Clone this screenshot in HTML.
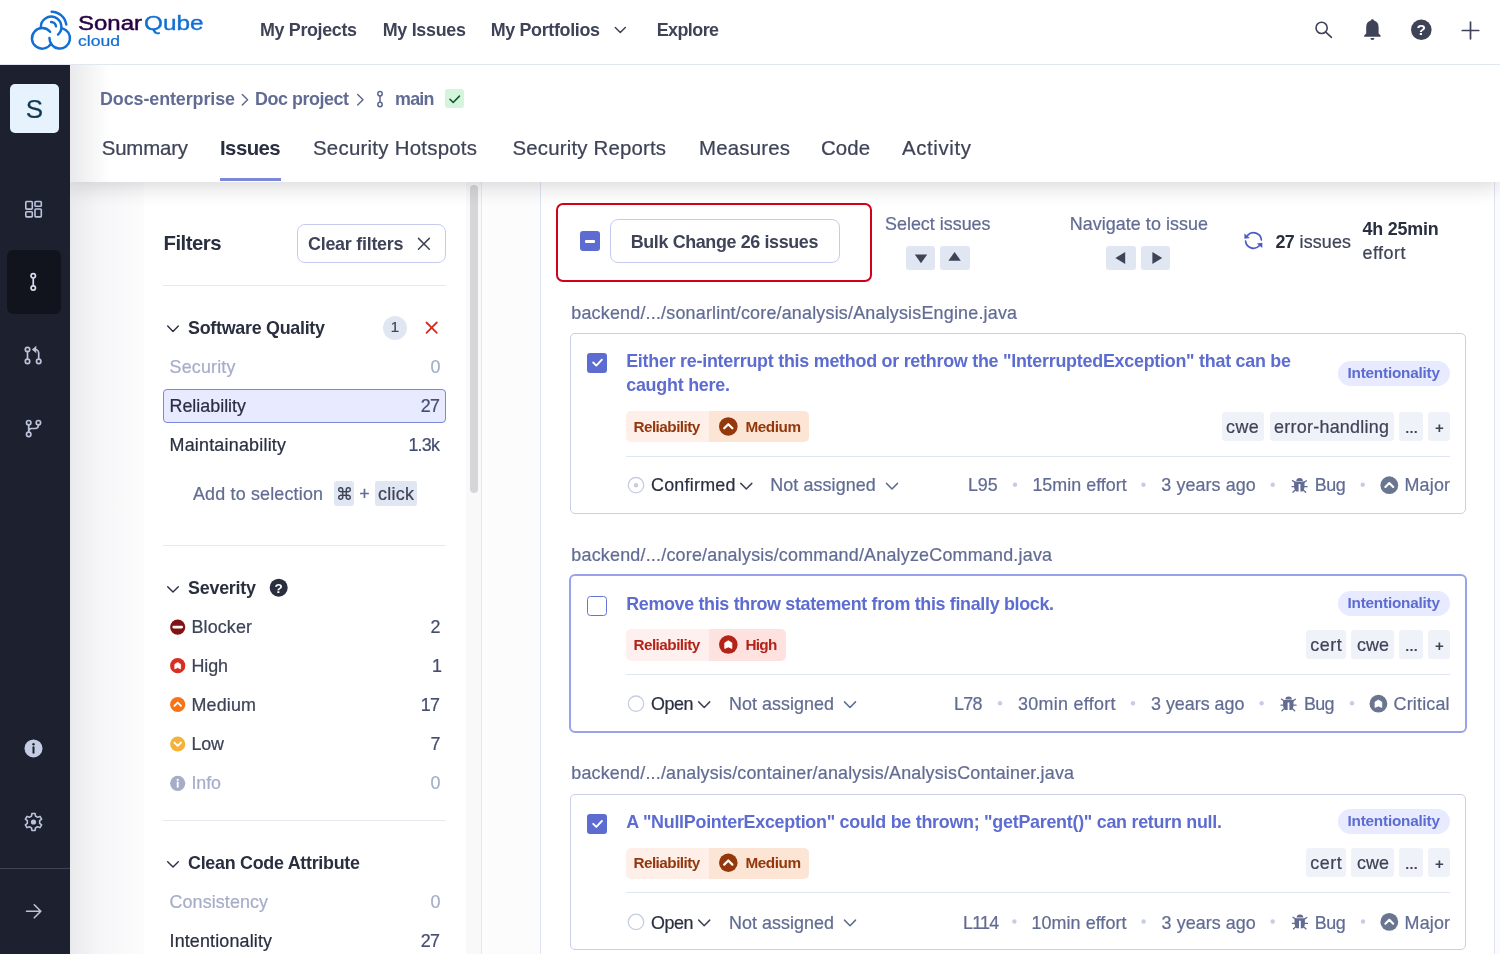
<!DOCTYPE html>
<html lang="en"><head><meta charset="utf-8"><title>SonarQube Cloud - Issues</title>
<style>
html,body{margin:0;padding:0}
body{width:1500px;height:954px;overflow:hidden;position:relative;background:#fff;font-family:"Liberation Sans", Arial, sans-serif;}
#root{position:absolute;left:0;top:0;width:1500px;height:954px;overflow:hidden;will-change:transform}
#root>div,#root>svg{position:absolute;box-sizing:border-box}
.t{position:absolute;white-space:pre;}
</style></head><body><div id="root">
<div style="left:70px;top:182px;width:1430px;height:772px;background:#fcfcfd;"></div>
<div style="left:144px;top:182px;width:326px;height:772px;background:#fff;"></div>
<div style="left:466px;top:182px;width:15px;height:772px;background:#f9f9fa;"></div>
<div style="left:470.3px;top:185px;width:7.699999999999989px;height:308px;background:#d6d6d8;border-radius:4px;"></div>
<div style="left:481px;top:182px;width:1px;height:772px;background:#e6e9f5;"></div>
<div style="left:540px;top:182px;width:955px;height:772px;background:#fff;border-left:1px solid #dfe3f3;border-right:1px solid #dfe3f3;"></div>
<div style="left:70px;top:65px;width:75px;height:889px;background:linear-gradient(90deg,rgba(40,44,60,.085),rgba(40,44,60,.026) 40%,rgba(40,44,60,0) 100%);"></div>
<div style="left:70px;top:65px;width:1430px;height:117px;background:#fff;box-shadow:0 2px 22px rgba(20,22,32,.20);"></div>
<div style="left:70px;top:65px;width:40px;height:117px;background:linear-gradient(90deg,rgba(40,44,60,.10),rgba(40,44,60,0));"></div>
<div style="left:220px;top:178px;width:61px;height:3px;background:#7b87d9;"></div>
<div style="left:0px;top:0px;width:1500px;height:65px;background:#fff;border-bottom:1px solid #e1e6f3;"></div>
<div style="left:0px;top:65px;width:70px;height:889px;background:#1d212f;"></div>
<div style="left:7px;top:250px;width:54px;height:64px;background:#12141d;border-radius:6px;"></div>
<div style="left:0px;top:868px;width:70px;height:1px;background:#3e4357;"></div>
<div style="left:10px;top:84px;width:49px;height:49px;background:#e7f3fc;border-radius:5px;"></div>
<div style="left:445px;top:89px;width:19px;height:19px;background:#d4f5dc;border-radius:3px;"></div>
<div style="left:297px;top:224px;width:149px;height:39px;border:1px solid #c6cbee;border-radius:8px;background:#fff;"></div>
<div style="left:163px;top:285px;width:283px;height:1px;background:#e8e9ee;"></div>
<div style="left:383px;top:315.5px;width:24px;height:24.0px;background:#e1e6f3;border-radius:12px;"></div>
<div style="left:163px;top:388.5px;width:283px;height:34.0px;background:#e8ebff;border:1px solid #7b87d9;border-radius:4px;"></div>
<div style="left:334px;top:481.3px;width:20.19999999999999px;height:24.30000000000001px;background:#e1e6f3;border-radius:3px;"></div>
<div style="left:375px;top:481.3px;width:42px;height:24.30000000000001px;background:#e1e6f3;border-radius:3px;"></div>
<div style="left:163px;top:545px;width:283px;height:1px;background:#e8e9ee;"></div>
<div style="left:163px;top:820px;width:283px;height:1px;background:#e8e9ee;"></div>
<div style="left:556px;top:203px;width:316px;height:79px;border:2.6px solid #d0021b;border-radius:7px;"></div>
<div style="left:580px;top:231px;width:20px;height:20px;background:#5d6cd0;border-radius:3px;"></div>
<div style="left:585px;top:239.6px;width:10px;height:3.5999999999999943px;background:#fff;border-radius:1px;"></div>
<div style="left:610px;top:219px;width:229.5px;height:44px;border:1px solid #c6cbee;border-radius:8px;background:#fff;"></div>
<div style="left:906px;top:245.7px;width:29.399999999999977px;height:24.0px;background:#e1e6f3;border-radius:3px;"></div>
<div style="left:940.3px;top:245.7px;width:29.399999999999977px;height:24.0px;background:#e1e6f3;border-radius:3px;"></div>
<div style="left:1106.4px;top:245.7px;width:29.40000000000009px;height:24.0px;background:#e1e6f3;border-radius:3px;"></div>
<div style="left:1140.7px;top:245.7px;width:29.40000000000009px;height:24.0px;background:#e1e6f3;border-radius:3px;"></div>
<div style="left:570px;top:333px;width:895.5px;height:181px;border:1px solid #c9cfe6;border-radius:5px;background:#fff;"></div>
<div style="left:587px;top:352.9px;width:20px;height:20.0px;background:#5d6cd0;border-radius:3px;"></div>
<div style="left:625.5px;top:411.2px;width:83.79999999999995px;height:31.30000000000001px;background:#fef0e9;border-radius:5px 0 0 5px;"></div>
<div style="left:709.3px;top:411.2px;width:100.10000000000002px;height:31.30000000000001px;background:#fde5d6;border-radius:0 5px 5px 0;"></div>
<div style="left:1337.5px;top:361.2px;width:112.5px;height:24.80000000000001px;background:#e8ebff;border-radius:13px;"></div>
<div style="left:1221.6px;top:411.9px;width:42.700000000000045px;height:29.30000000000001px;background:#eff2f9;border-radius:3px;"></div>
<div style="left:1269.6px;top:411.9px;width:124.40000000000009px;height:29.30000000000001px;background:#eff2f9;border-radius:3px;"></div>
<div style="left:1399.2px;top:411.9px;width:24.0px;height:29.30000000000001px;background:#eff2f9;border-radius:3px;"></div>
<div style="left:1428.3px;top:411.9px;width:21.700000000000045px;height:29.30000000000001px;background:#eff2f9;border-radius:3px;"></div>
<div style="left:626px;top:456px;width:824px;height:1px;background:#e1e6f3;"></div>
<div style="left:569px;top:574.4px;width:897.5px;height:158.30000000000007px;border:2px solid #98a3ec;border-radius:6px;background:#fff;"></div>
<div style="left:587px;top:596px;width:20px;height:19.5px;background:#fff;border:1.4px solid #6575d6;border-radius:3.5px;"></div>
<div style="left:625.5px;top:629.3px;width:83.79999999999995px;height:31.300000000000068px;background:#fef0ee;border-radius:5px 0 0 5px;"></div>
<div style="left:709.3px;top:629.3px;width:76.70000000000005px;height:31.300000000000068px;background:#fde2df;border-radius:0 5px 5px 0;"></div>
<div style="left:1337.5px;top:590.8px;width:112.5px;height:24.799999999999955px;background:#e8ebff;border-radius:13px;"></div>
<div style="left:1305.6px;top:630px;width:40.600000000000136px;height:29.299999999999955px;background:#eff2f9;border-radius:3px;"></div>
<div style="left:1351px;top:630px;width:43px;height:29.299999999999955px;background:#eff2f9;border-radius:3px;"></div>
<div style="left:1399.2px;top:630px;width:24.0px;height:29.299999999999955px;background:#eff2f9;border-radius:3px;"></div>
<div style="left:1428.3px;top:630px;width:21.700000000000045px;height:29.299999999999955px;background:#eff2f9;border-radius:3px;"></div>
<div style="left:626px;top:674px;width:824px;height:1px;background:#e1e6f3;"></div>
<div style="left:570px;top:794px;width:895.5px;height:155.5px;border:1px solid #c9cfe6;border-radius:5px;background:#fff;"></div>
<div style="left:587px;top:814.2px;width:20px;height:20.0px;background:#5d6cd0;border-radius:3px;"></div>
<div style="left:625.5px;top:847.5px;width:83.79999999999995px;height:31.300000000000068px;background:#fef0e9;border-radius:5px 0 0 5px;"></div>
<div style="left:709.3px;top:847.5px;width:100.10000000000002px;height:31.300000000000068px;background:#fde5d6;border-radius:0 5px 5px 0;"></div>
<div style="left:1337.5px;top:809.0px;width:112.5px;height:24.799999999999955px;background:#e8ebff;border-radius:13px;"></div>
<div style="left:1305.6px;top:848.2px;width:40.600000000000136px;height:29.299999999999955px;background:#eff2f9;border-radius:3px;"></div>
<div style="left:1351px;top:848.2px;width:43px;height:29.299999999999955px;background:#eff2f9;border-radius:3px;"></div>
<div style="left:1399.2px;top:848.2px;width:24.0px;height:29.299999999999955px;background:#eff2f9;border-radius:3px;"></div>
<div style="left:1428.3px;top:848.2px;width:21.700000000000045px;height:29.299999999999955px;background:#eff2f9;border-radius:3px;"></div>
<div style="left:626px;top:892px;width:824px;height:1px;background:#e1e6f3;"></div>
<svg style="left:0;top:0" width="1500" height="954" viewBox="0 0 1500 954">
<path d="M593.2 362.5l3.1 3.1 5.6-5.9" fill="none" stroke="#fff" stroke-width="1.9" stroke-linecap="round" stroke-linejoin="round"/>
<circle cx="728.3" cy="426.45000000000005" r="9.3" fill="#93370d"/>
<path d="M724.21 428.31l4.09 -4.09 4.09 4.09" fill="none" stroke="#fff" stroke-width="2.23" stroke-linecap="round" stroke-linejoin="round"/>
<circle cx="636" cy="485.2" r="7.7" fill="#fff" stroke="#c5cde0" stroke-width="1.3"/>
<circle cx="636" cy="485.2" r="2.2" fill="#c5cde0"/>
<path d="M740.8 483.4l5.5 5.6 5.5 -5.6" fill="none" stroke="#3e4357" stroke-width="1.5" stroke-linecap="round" stroke-linejoin="round"/>
<path d="M886.5 483.4l5.5 5.6 5.5 -5.6" fill="none" stroke="#626c93" stroke-width="1.5" stroke-linecap="round" stroke-linejoin="round"/>
<circle cx="1015" cy="484.8" r="2.2" fill="#c5cde6"/>
<circle cx="1143.5" cy="484.8" r="2.2" fill="#c5cde6"/>
<circle cx="1272.7" cy="484.8" r="2.2" fill="#c5cde6"/>
<circle cx="1362.7" cy="484.8" r="2.2" fill="#c5cde6"/>
<g transform="translate(1292 485.2)"><path fill="#626c93" d="M4.3 -4.3a3.3 3 0 0 1 6.6 0z"/><path fill="#626c93" d="M2.1 -3.6h10.400v5c0 2.500-1 4-2 5h-6.400c-1-1-2-2.500-2-5z"/><rect x="6.600" y="-1.200" width="1.800" height="8" fill="#fff"/><path d="M.5 -4.600l2.500 1.600M14.400 -4.400l-2.500 1.600M0 1.500h2.500M12.400 1.500h2.700M3.400 4.800l-2.500 2.200M11.200 4.800l2.500 2.200" fill="none" stroke="#626c93" stroke-width="1.300" stroke-linecap="round"/></g>
<circle cx="1389.3" cy="485.2" r="8.9" fill="#6a7590"/>
<path d="M1385.38 486.98l3.92 -3.92 3.92 3.92" fill="none" stroke="#fff" stroke-width="2.14" stroke-linecap="round" stroke-linejoin="round"/>
<circle cx="728.3" cy="644.5500000000001" r="9.3" fill="#b42318"/>
<path fill="#fff" stroke="#fff" stroke-width="0.84" stroke-linejoin="round" d="M728.30 640.74l3.53 2.14v5.58l-3.53 -1.58l-3.53 1.58v-5.58z"/>
<circle cx="636" cy="703.7" r="7.7" fill="#fff" stroke="#c5cde0" stroke-width="1.3"/>
<path d="M698.7 701.9000000000001l5.5 5.6 5.5 -5.6" fill="none" stroke="#3e4357" stroke-width="1.5" stroke-linecap="round" stroke-linejoin="round"/>
<path d="M844.5 701.9000000000001l5.5 5.6 5.5 -5.6" fill="none" stroke="#626c93" stroke-width="1.5" stroke-linecap="round" stroke-linejoin="round"/>
<circle cx="1000" cy="703.3000000000001" r="2.2" fill="#c5cde6"/>
<circle cx="1133" cy="703.3000000000001" r="2.2" fill="#c5cde6"/>
<circle cx="1261.6" cy="703.3000000000001" r="2.2" fill="#c5cde6"/>
<circle cx="1352" cy="703.3000000000001" r="2.2" fill="#c5cde6"/>
<g transform="translate(1281 703.7)"><path fill="#626c93" d="M4.3 -4.3a3.3 3 0 0 1 6.6 0z"/><path fill="#626c93" d="M2.1 -3.6h10.400v5c0 2.500-1 4-2 5h-6.400c-1-1-2-2.500-2-5z"/><rect x="6.600" y="-1.200" width="1.800" height="8" fill="#fff"/><path d="M.5 -4.600l2.500 1.600M14.400 -4.400l-2.500 1.600M0 1.500h2.500M12.400 1.500h2.700M3.400 4.800l-2.500 2.200M11.200 4.800l2.500 2.200" fill="none" stroke="#626c93" stroke-width="1.300" stroke-linecap="round"/></g>
<circle cx="1378.4" cy="703.7" r="8.9" fill="#6a7590"/>
<path fill="#fff" stroke="#fff" stroke-width="0.80" stroke-linejoin="round" d="M1378.40 700.05l3.38 2.05v5.34l-3.38 -1.51l-3.38 1.51v-5.34z"/>
<path d="M593.2 823.8000000000001l3.1 3.1 5.6-5.9" fill="none" stroke="#fff" stroke-width="1.9" stroke-linecap="round" stroke-linejoin="round"/>
<circle cx="728.3" cy="862.7500000000001" r="9.3" fill="#93370d"/>
<path d="M724.21 864.61l4.09 -4.09 4.09 4.09" fill="none" stroke="#fff" stroke-width="2.23" stroke-linecap="round" stroke-linejoin="round"/>
<circle cx="636" cy="921.9000000000001" r="7.7" fill="#fff" stroke="#c5cde0" stroke-width="1.3"/>
<path d="M698.7 920.1000000000001l5.5 5.6 5.5 -5.6" fill="none" stroke="#3e4357" stroke-width="1.5" stroke-linecap="round" stroke-linejoin="round"/>
<path d="M844.5 920.1000000000001l5.5 5.6 5.5 -5.6" fill="none" stroke="#626c93" stroke-width="1.5" stroke-linecap="round" stroke-linejoin="round"/>
<circle cx="1014.4" cy="921.5000000000001" r="2.2" fill="#c5cde6"/>
<circle cx="1143.6" cy="921.5000000000001" r="2.2" fill="#c5cde6"/>
<circle cx="1272.7" cy="921.5000000000001" r="2.2" fill="#c5cde6"/>
<circle cx="1363" cy="921.5000000000001" r="2.2" fill="#c5cde6"/>
<g transform="translate(1292.4 921.9000000000001)"><path fill="#626c93" d="M4.3 -4.3a3.3 3 0 0 1 6.6 0z"/><path fill="#626c93" d="M2.1 -3.6h10.400v5c0 2.500-1 4-2 5h-6.400c-1-1-2-2.500-2-5z"/><rect x="6.600" y="-1.200" width="1.800" height="8" fill="#fff"/><path d="M.5 -4.600l2.500 1.600M14.400 -4.400l-2.500 1.600M0 1.500h2.500M12.400 1.500h2.700M3.400 4.800l-2.500 2.200M11.200 4.800l2.500 2.200" fill="none" stroke="#626c93" stroke-width="1.300" stroke-linecap="round"/></g>
<circle cx="1389.3" cy="921.9000000000001" r="8.9" fill="#6a7590"/>
<path d="M1385.38 923.68l3.92 -3.92 3.92 3.92" fill="none" stroke="#fff" stroke-width="2.14" stroke-linecap="round" stroke-linejoin="round"/>
<g transform="translate(25 5) scale(0.05556)" fill="none" stroke="#126ed3" stroke-width="44" stroke-linecap="round"><path d="M452 482A185 185 0 1 0 470 693"/><path d="M440 595A185 185 0 1 0 670 420"/><path d="M285 400A185 185 0 1 1 594 532"/><path d="M470 305A90 90 0 0 1 558 385"/><path d="M480 120A275 275 0 0 1 743 350"/></g>
<g fill="none" stroke="#3e4357" stroke-width="1.6" stroke-linecap="round"><circle cx="1321.6" cy="27.9" r="5.6"/><path d="M1325.8 32.2l5.6 5.2"/></g>
<path fill="#3e4357" d="M1372.4 19.2c.9 0 1.5.6 1.6 1.4 3 .8 4.6 3.3 4.6 6.6v6.2l2 2v1.3h-16.4v-1.3l2-2v-6.2c0-3.3 1.6-5.800 4.600-6.600.1-.8.700-1.400 1.600-1.400zM1370.400 38h4a2 2 0 0 1-4 0z"/>
<circle cx="1421.3" cy="29.7" r="10.3" fill="#3e4357"/>
<path d="M1462.300 30.500h16.400M1470.500 22.200v16.600" stroke="#3e4357" stroke-width="1.7" stroke-linecap="round"/>
<path d="M615.300 27.500l5 5 5-5" fill="none" stroke="#3e4357" stroke-width="1.500" stroke-linecap="round" stroke-linejoin="round"/>
<g fill="none" stroke="#5c668f" stroke-width="1.400" stroke-linecap="round" stroke-linejoin="round"><path d="M242.300 94.400l5.300 5.300-5.300 5.300M357.700 94.400l5.300 5.300-5.300 5.300"/></g>
<g fill="none" stroke="#5c668f" stroke-width="1.500"><circle cx="380" cy="93.700" r="2.200"/><circle cx="380" cy="104.500" r="2.200"/><path d="M380 95.900v6.400"/></g>
<path d="M450 99.300l3.200 3.200 6.200-6.400" fill="none" stroke="#14532d" stroke-width="1.600" stroke-linecap="round" stroke-linejoin="round"/>
<g fill="none" stroke="#bcc3d9" stroke-width="1.600" stroke-linejoin="round"><rect x="25.800" y="201.500" width="6.500" height="7.600" rx=".8"/><rect x="35" y="201.500" width="6.300" height="4.700" rx=".8"/><rect x="25.800" y="211.800" width="6.500" height="5.100" rx=".8"/><rect x="35" y="209" width="6.300" height="7.900" rx=".8"/></g>
<g fill="none" stroke="#d7dcee" stroke-width="1.700"><circle cx="33.250" cy="275.800" r="2.200"/><circle cx="33.250" cy="288" r="2.200"/><path d="M33.250 278v7.800"/></g>
<g fill="none" stroke="#bcc3d9" stroke-width="1.700" stroke-linecap="round"><circle cx="27.500" cy="349.500" r="2.200"/><circle cx="27.500" cy="361.400" r="2.200"/><circle cx="38.700" cy="361.400" r="2.200"/><path d="M27.500 351.700v7.500M38.700 359.200v-6.200a3.500 3.500 0 0 0-3.500-3.500h-1.700"/></g>
<path fill="#bcc3d9" d="M32 349.500l4.300-3.800v7.600z"/>
<g fill="none" stroke="#bcc3d9" stroke-width="1.700" stroke-linecap="round"><circle cx="28.700" cy="422.700" r="2.200"/><circle cx="28.700" cy="434.400" r="2.200"/><circle cx="38.400" cy="422.700" r="2.200"/><path d="M28.700 424.900v7.300M38.400 424.900v.6a3 3 0 0 1-3 3h-3.700a3 3 0 0 0-3 3"/></g>
<circle cx="33.500" cy="748.400" r="9" fill="#c5cde4"/><circle cx="33.500" cy="744.300" r="1.200" fill="#1d212f"/><path d="M33.500 747.300v5.400" stroke="#1d212f" stroke-width="2" stroke-linecap="round"/>
<path d="M31.55 816.01L31.89 813.55L35.11 813.55L35.45 816.01L37.72 817.32L40.01 816.38L41.62 819.17L39.66 820.69L39.66 823.31L41.62 824.83L40.01 827.62L37.72 826.68L35.45 827.99L35.11 830.45L31.89 830.45L31.55 827.99L29.28 826.68L26.99 827.62L25.38 824.83L27.34 823.31L27.34 820.69L25.38 819.17L26.99 816.38L29.28 817.32Z" fill="none" stroke="#bcc3d9" stroke-width="1.6" stroke-linejoin="round"/>
<circle cx="33.500" cy="822" r="2.600" fill="#bcc3d9"/>
<path d="M26.500 911.300h14M34.300 904.800l6.500 6.500-6.500 6.500" fill="none" stroke="#bcc3d9" stroke-width="1.600" stroke-linecap="round" stroke-linejoin="round"/>
<path d="M418.500 238.400l10.800 10.800M429.300 238.400l-10.800 10.800" stroke="#3e4357" stroke-width="1.500" stroke-linecap="round"/>
<path d="M426.500 322.500l10.300 10.300M436.800 322.500l-10.300 10.300" stroke="#dd2c1c" stroke-width="1.800" stroke-linecap="round"/>
<path d="M167.7 326.1l5.300 5.300 5.300-5.300" fill="none" stroke="#2a2f40" stroke-width="1.400" stroke-linecap="round" stroke-linejoin="round"/>
<path d="M167.7 586.8l5.300 5.300 5.300-5.300" fill="none" stroke="#2a2f40" stroke-width="1.400" stroke-linecap="round" stroke-linejoin="round"/>
<path d="M167.7 861.8l5.300 5.300 5.300-5.300" fill="none" stroke="#2a2f40" stroke-width="1.400" stroke-linecap="round" stroke-linejoin="round"/>
<circle cx="278.700" cy="587.700" r="9" fill="#2a2f40"/>
<circle cx="177.7" cy="627.1" r="7.6" fill="#801313"/>
<path d="M173.7 627.1h8.0" stroke="#fff" stroke-width="2.6" stroke-linecap="round"/>
<circle cx="177.7" cy="665.7" r="7.6" fill="#d92d20"/>
<path fill="#fff" stroke="#fff" stroke-width="0.70" stroke-linejoin="round" d="M177.70 662.50l2.90 1.80v4.60l-2.90 -1.30l-2.90 1.30v-4.60z"/>
<circle cx="177.7" cy="704.5" r="7.6" fill="#f97316"/>
<path d="M174.39999999999998 705.9l3.3 -3.3 3.3 3.3" fill="none" stroke="#fff" stroke-width="1.9" stroke-linecap="round" stroke-linejoin="round"/>
<circle cx="177.7" cy="744" r="7.6" fill="#f4b23c"/>
<path d="M174.39999999999998 742.6l3.3 3.3 3.3 -3.3" fill="none" stroke="#fff" stroke-width="1.9" stroke-linecap="round" stroke-linejoin="round"/>
<circle cx="177.7" cy="783.3" r="7.6" fill="#a6adc9"/>
<circle cx="177.7" cy="779.9" r="1.1" fill="#fff"/><path d="M177.7 782.5v4.4" stroke="#fff" stroke-width="1.9" stroke-linecap="round"/>
<path fill="#3e4357" d="M914.800 254.400h12.400l-6.200 8.900z"/>
<path fill="#3e4357" d="M948.400 260.800h12.400l-6.200-8.900z"/>
<path fill="#3e4357" d="M1125.200 252v12l-9.800-6z"/>
<path fill="#3e4357" d="M1152.400 252v12l9.800-6z"/>
<g fill="none" stroke="#4d59c9" stroke-width="1.700" stroke-linecap="round"><path d="M1261.400 240A7.900 7.900 0 0 0 1247.600 235.400"/><path d="M1245.600 241.200A7.900 7.900 0 0 0 1259.300 245.700"/></g>
<path fill="#4d59c9" d="M1244.400 233.500v5.300l5.500-.7zM1262.300 248v-5.300l-5.500.7z"/>
</svg>
<span class="t" style="left:10.0px;top:96px;font-size:26px;line-height:26px;color:#12384f;-webkit-text-stroke:0.22px;width:49px;text-align:center;">S</span>
<span class="t" style="left:78.0px;top:14px;font-size:19.5px;line-height:19.5px;color:#290042;transform:scaleX(1.2297);transform-origin:0 0;-webkit-text-stroke:0.45px #290042;">Sonar</span>
<span class="t" style="left:143.5px;top:14px;font-size:19.5px;line-height:19.5px;color:#126ed3;transform:scaleX(1.2473);transform-origin:0 0;-webkit-text-stroke:0.35px #126ed3;">Qube</span>
<span class="t" style="left:78.0px;top:33px;font-size:15px;line-height:15px;color:#126ed3;-webkit-text-stroke:0.22px;transform:scaleX(1.1712);transform-origin:0 0;">cloud</span>
<span class="t" style="left:260.0px;top:22px;font-size:17.9px;line-height:17.9px;color:#3e4357;font-weight:700;letter-spacing:-0.344px;">My Projects</span>
<span class="t" style="left:382.7px;top:22px;font-size:17.9px;line-height:17.9px;color:#3e4357;font-weight:700;letter-spacing:-0.279px;">My Issues</span>
<span class="t" style="left:490.7px;top:22px;font-size:17.9px;line-height:17.9px;color:#3e4357;font-weight:700;letter-spacing:-0.334px;">My Portfolios</span>
<span class="t" style="left:656.7px;top:22px;font-size:17.9px;line-height:17.9px;color:#3e4357;font-weight:700;letter-spacing:-0.554px;">Explore</span>
<span class="t" style="left:100.0px;top:91px;font-size:17.9px;line-height:17.9px;color:#626c93;font-weight:700;letter-spacing:-0.087px;">Docs-enterprise</span>
<span class="t" style="left:255.0px;top:91px;font-size:17.9px;line-height:17.9px;color:#626c93;font-weight:700;letter-spacing:-0.442px;">Doc project</span>
<span class="t" style="left:395.0px;top:91px;font-size:17.9px;line-height:17.9px;color:#626c93;font-weight:700;letter-spacing:-0.750px;">main</span>
<span class="t" style="left:101.7px;top:138px;font-size:20.4px;line-height:20.4px;color:#3e4357;-webkit-text-stroke:0.22px;letter-spacing:-0.158px;">Summary</span>
<span class="t" style="left:220.0px;top:138px;font-size:20.4px;line-height:20.4px;color:#2a2f40;font-weight:700;letter-spacing:-0.557px;">Issues</span>
<span class="t" style="left:313.0px;top:138px;font-size:20.4px;line-height:20.4px;color:#3e4357;-webkit-text-stroke:0.22px;letter-spacing:0.263px;">Security Hotspots</span>
<span class="t" style="left:512.5px;top:138px;font-size:20.4px;line-height:20.4px;color:#3e4357;-webkit-text-stroke:0.22px;letter-spacing:0.184px;">Security Reports</span>
<span class="t" style="left:699.0px;top:138px;font-size:20.4px;line-height:20.4px;color:#3e4357;-webkit-text-stroke:0.22px;letter-spacing:0.210px;">Measures</span>
<span class="t" style="left:821.0px;top:138px;font-size:20.4px;line-height:20.4px;color:#3e4357;-webkit-text-stroke:0.22px;letter-spacing:0.083px;">Code</span>
<span class="t" style="left:902.0px;top:138px;font-size:20.4px;line-height:20.4px;color:#3e4357;-webkit-text-stroke:0.22px;letter-spacing:0.632px;">Activity</span>
<span class="t" style="left:163.5px;top:233px;font-size:20.4px;line-height:20.4px;color:#2a2f40;font-weight:700;letter-spacing:-0.517px;">Filters</span>
<span class="t" style="left:308.0px;top:236px;font-size:17.9px;line-height:17.9px;color:#3e4357;font-weight:700;letter-spacing:-0.246px;">Clear filters</span>
<span class="t" style="left:188.0px;top:320px;font-size:17.9px;line-height:17.9px;color:#2a2f40;font-weight:700;letter-spacing:-0.278px;">Software Quality</span>
<span class="t" style="left:383.0px;top:319px;font-size:15px;line-height:15px;color:#3e4357;-webkit-text-stroke:0.22px;width:24px;text-align:center;">1</span>
<span class="t" style="left:169.5px;top:359px;font-size:17.9px;line-height:17.9px;color:#a6adc9;-webkit-text-stroke:0.22px;letter-spacing:0.194px;">Security</span>
<span class="t" style="left:430.5px;top:359px;font-size:17.9px;line-height:17.9px;color:#a6adc9;-webkit-text-stroke:0.22px;">0</span>
<span class="t" style="left:169.5px;top:398px;font-size:17.9px;line-height:17.9px;color:#2a2f40;-webkit-text-stroke:0.22px;letter-spacing:-0.006px;">Reliability</span>
<span class="t" style="left:420.8px;top:398px;font-size:17.9px;line-height:17.9px;color:#454d70;-webkit-text-stroke:0.22px;letter-spacing:-0.750px;">27</span>
<span class="t" style="left:169.5px;top:437px;font-size:17.9px;line-height:17.9px;color:#2a2f40;-webkit-text-stroke:0.22px;letter-spacing:0.223px;">Maintainability</span>
<span class="t" style="left:408.4px;top:437px;font-size:17.9px;line-height:17.9px;color:#454d70;-webkit-text-stroke:0.22px;letter-spacing:-0.750px;">1.3k</span>
<span class="t" style="left:193.0px;top:486px;font-size:17.9px;line-height:17.9px;color:#626c93;-webkit-text-stroke:0.22px;letter-spacing:0.179px;">Add to selection</span>
<span class="t" style="left:335.5px;top:486px;font-size:17px;line-height:17px;color:#3e4357;-webkit-text-stroke:0.22px;font-family:"DejaVu Sans",sans-serif;">⌘</span>
<span class="t" style="left:359.3px;top:486px;font-size:17.9px;line-height:17.9px;color:#626c93;-webkit-text-stroke:0.22px;">+</span>
<span class="t" style="left:378.0px;top:486px;font-size:17.9px;line-height:17.9px;color:#3e4357;-webkit-text-stroke:0.22px;letter-spacing:0.301px;">click</span>
<span class="t" style="left:188.0px;top:580px;font-size:17.9px;line-height:17.9px;color:#2a2f40;font-weight:700;letter-spacing:-0.232px;">Severity</span>
<span class="t" style="left:191.5px;top:619px;font-size:17.9px;line-height:17.9px;color:#3e4357;-webkit-text-stroke:0.22px;letter-spacing:0.141px;">Blocker</span>
<span class="t" style="left:430.5px;top:619px;font-size:17.9px;line-height:17.9px;color:#454d70;-webkit-text-stroke:0.22px;">2</span>
<span class="t" style="left:191.5px;top:658px;font-size:17.9px;line-height:17.9px;color:#3e4357;-webkit-text-stroke:0.22px;letter-spacing:-0.099px;">High</span>
<span class="t" style="left:432.0px;top:658px;font-size:17.9px;line-height:17.9px;color:#454d70;-webkit-text-stroke:0.22px;">1</span>
<span class="t" style="left:191.5px;top:697px;font-size:17.9px;line-height:17.9px;color:#3e4357;-webkit-text-stroke:0.22px;letter-spacing:0.172px;">Medium</span>
<span class="t" style="left:420.8px;top:697px;font-size:17.9px;line-height:17.9px;color:#454d70;-webkit-text-stroke:0.22px;letter-spacing:-0.750px;">17</span>
<span class="t" style="left:191.5px;top:736px;font-size:17.9px;line-height:17.9px;color:#3e4357;-webkit-text-stroke:0.22px;letter-spacing:-0.164px;">Low</span>
<span class="t" style="left:430.5px;top:736px;font-size:17.9px;line-height:17.9px;color:#454d70;-webkit-text-stroke:0.22px;">7</span>
<span class="t" style="left:191.5px;top:775px;font-size:17.9px;line-height:17.9px;color:#a6adc9;-webkit-text-stroke:0.22px;letter-spacing:-0.115px;">Info</span>
<span class="t" style="left:430.5px;top:775px;font-size:17.9px;line-height:17.9px;color:#a6adc9;-webkit-text-stroke:0.22px;">0</span>
<span class="t" style="left:188.0px;top:855px;font-size:17.9px;line-height:17.9px;color:#2a2f40;font-weight:700;letter-spacing:-0.277px;">Clean Code Attribute</span>
<span class="t" style="left:169.5px;top:894px;font-size:17.9px;line-height:17.9px;color:#a6adc9;-webkit-text-stroke:0.22px;letter-spacing:0.105px;">Consistency</span>
<span class="t" style="left:430.5px;top:894px;font-size:17.9px;line-height:17.9px;color:#a6adc9;-webkit-text-stroke:0.22px;">0</span>
<span class="t" style="left:169.5px;top:933px;font-size:17.9px;line-height:17.9px;color:#2a2f40;-webkit-text-stroke:0.22px;letter-spacing:0.157px;">Intentionality</span>
<span class="t" style="left:420.8px;top:933px;font-size:17.9px;line-height:17.9px;color:#454d70;-webkit-text-stroke:0.22px;letter-spacing:-0.750px;">27</span>
<span class="t" style="left:630.7px;top:234px;font-size:17.9px;line-height:17.9px;color:#3e4357;font-weight:700;letter-spacing:-0.360px;">Bulk Change 26 issues</span>
<span class="t" style="left:885.0px;top:216px;font-size:17.9px;line-height:17.9px;color:#626c93;-webkit-text-stroke:0.22px;letter-spacing:0.008px;">Select issues</span>
<span class="t" style="left:1069.7px;top:216px;font-size:17.9px;line-height:17.9px;color:#626c93;-webkit-text-stroke:0.22px;letter-spacing:0.066px;">Navigate to issue</span>
<span class="t" style="left:1275.6px;top:234px;font-size:17.9px;line-height:17.9px;color:#2a2f40;font-weight:700;letter-spacing:-0.750px;">27</span>
<span class="t" style="left:1294.4px;top:234px;font-size:17.9px;line-height:17.9px;color:#3e4357;-webkit-text-stroke:0.22px;letter-spacing:0.152px;"> issues</span>
<span class="t" style="left:1362.4px;top:221px;font-size:17.9px;line-height:17.9px;color:#2a2f40;font-weight:700;letter-spacing:-0.195px;">4h 25min</span>
<span class="t" style="left:1362.4px;top:245px;font-size:17.9px;line-height:17.9px;color:#3e4357;-webkit-text-stroke:0.22px;letter-spacing:0.549px;">effort</span>
<span class="t" style="left:571.3px;top:305px;font-size:17.9px;line-height:17.9px;color:#626c93;-webkit-text-stroke:0.22px;letter-spacing:0.206px;">backend/.../sonarlint/core/analysis/AnalysisEngine.java</span>
<span class="t" style="left:626.2px;top:353px;font-size:17.9px;line-height:17.9px;color:#5d6cd0;font-weight:700;letter-spacing:-0.252px;">Either re-interrupt this method or rethrow the &quot;InterruptedException&quot; that can be</span>
<span class="t" style="left:626.2px;top:377px;font-size:17.9px;line-height:17.9px;color:#5d6cd0;font-weight:700;letter-spacing:-0.234px;">caught here.</span>
<span class="t" style="left:633.4px;top:419px;font-size:15.3px;line-height:15.3px;color:#93370d;font-weight:700;letter-spacing:-0.527px;">Reliability</span>
<span class="t" style="left:745.5px;top:419px;font-size:15.3px;line-height:15.3px;color:#93370d;font-weight:700;letter-spacing:-0.459px;">Medium</span>
<span class="t" style="left:1347.5px;top:365px;font-size:15.3px;line-height:15.3px;color:#5d6cd0;font-weight:700;letter-spacing:-0.207px;">Intentionality</span>
<span class="t" style="left:1226.0px;top:419px;font-size:17.9px;line-height:17.9px;color:#3e4357;-webkit-text-stroke:0.22px;letter-spacing:0.486px;">cwe</span>
<span class="t" style="left:1274.0px;top:419px;font-size:17.9px;line-height:17.9px;color:#3e4357;-webkit-text-stroke:0.22px;letter-spacing:0.278px;">error-handling</span>
<span class="t" style="left:1404.7px;top:419px;font-size:17.9px;line-height:17.9px;color:#3e4357;-webkit-text-stroke:0.22px;letter-spacing:-0.750px;">...</span>
<span class="t" style="left:1435.0px;top:420px;font-size:15px;line-height:15px;color:#3e4357;font-weight:700;">+</span>
<span class="t" style="left:651.0px;top:477px;font-size:17.9px;line-height:17.9px;color:#2a2f40;-webkit-text-stroke:0.22px;letter-spacing:0.234px;">Confirmed</span>
<span class="t" style="left:770.3px;top:477px;font-size:17.9px;line-height:17.9px;color:#626c93;-webkit-text-stroke:0.22px;letter-spacing:0.088px;">Not assigned</span>
<span class="t" style="left:968.0px;top:477px;font-size:17.9px;line-height:17.9px;color:#626c93;-webkit-text-stroke:0.22px;letter-spacing:-0.130px;">L95</span>
<span class="t" style="left:1032.4px;top:477px;font-size:17.9px;line-height:17.9px;color:#626c93;-webkit-text-stroke:0.22px;letter-spacing:0.013px;">15min effort</span>
<span class="t" style="left:1161.3px;top:477px;font-size:17.9px;line-height:17.9px;color:#626c93;-webkit-text-stroke:0.22px;letter-spacing:0.090px;">3 years ago</span>
<span class="t" style="left:1314.7px;top:477px;font-size:17.9px;line-height:17.9px;color:#626c93;-webkit-text-stroke:0.22px;letter-spacing:-0.422px;">Bug</span>
<span class="t" style="left:1404.5px;top:477px;font-size:17.9px;line-height:17.9px;color:#626c93;-webkit-text-stroke:0.22px;letter-spacing:0.188px;">Major</span>
<span class="t" style="left:571.3px;top:547px;font-size:17.9px;line-height:17.9px;color:#626c93;-webkit-text-stroke:0.22px;letter-spacing:0.218px;">backend/.../core/analysis/command/AnalyzeCommand.java</span>
<span class="t" style="left:626.2px;top:596px;font-size:17.9px;line-height:17.9px;color:#5d6cd0;font-weight:700;letter-spacing:-0.325px;">Remove this throw statement from this finally block.</span>
<span class="t" style="left:633.4px;top:637px;font-size:15.3px;line-height:15.3px;color:#b42318;font-weight:700;letter-spacing:-0.527px;">Reliability</span>
<span class="t" style="left:745.5px;top:637px;font-size:15.3px;line-height:15.3px;color:#b42318;font-weight:700;letter-spacing:-0.750px;">High</span>
<span class="t" style="left:1347.5px;top:595px;font-size:15.3px;line-height:15.3px;color:#5d6cd0;font-weight:700;letter-spacing:-0.207px;">Intentionality</span>
<span class="t" style="left:1310.2px;top:637px;font-size:17.9px;line-height:17.9px;color:#3e4357;-webkit-text-stroke:0.22px;letter-spacing:0.591px;">cert</span>
<span class="t" style="left:1357.0px;top:637px;font-size:17.9px;line-height:17.9px;color:#3e4357;-webkit-text-stroke:0.22px;letter-spacing:0.086px;">cwe</span>
<span class="t" style="left:1404.7px;top:637px;font-size:17.9px;line-height:17.9px;color:#3e4357;-webkit-text-stroke:0.22px;letter-spacing:-0.750px;">...</span>
<span class="t" style="left:1435.0px;top:638px;font-size:15px;line-height:15px;color:#3e4357;font-weight:700;">+</span>
<span class="t" style="left:651.0px;top:696px;font-size:17.9px;line-height:17.9px;color:#2a2f40;-webkit-text-stroke:0.22px;letter-spacing:-0.427px;">Open</span>
<span class="t" style="left:729.0px;top:696px;font-size:17.9px;line-height:17.9px;color:#626c93;-webkit-text-stroke:0.22px;letter-spacing:0.051px;">Not assigned</span>
<span class="t" style="left:954.0px;top:696px;font-size:17.9px;line-height:17.9px;color:#626c93;-webkit-text-stroke:0.22px;letter-spacing:-0.730px;">L78</span>
<span class="t" style="left:1018.0px;top:696px;font-size:17.9px;line-height:17.9px;color:#626c93;-webkit-text-stroke:0.22px;letter-spacing:0.313px;">30min effort</span>
<span class="t" style="left:1151.0px;top:696px;font-size:17.9px;line-height:17.9px;color:#626c93;-webkit-text-stroke:0.22px;letter-spacing:-0.010px;">3 years ago</span>
<span class="t" style="left:1304.0px;top:696px;font-size:17.9px;line-height:17.9px;color:#626c93;-webkit-text-stroke:0.22px;letter-spacing:-0.722px;">Bug</span>
<span class="t" style="left:1393.6px;top:696px;font-size:17.9px;line-height:17.9px;color:#626c93;-webkit-text-stroke:0.22px;letter-spacing:0.190px;">Critical</span>
<span class="t" style="left:571.3px;top:765px;font-size:17.9px;line-height:17.9px;color:#626c93;-webkit-text-stroke:0.22px;letter-spacing:0.187px;">backend/.../analysis/container/analysis/AnalysisContainer.java</span>
<span class="t" style="left:626.2px;top:814px;font-size:17.9px;line-height:17.9px;color:#5d6cd0;font-weight:700;letter-spacing:-0.267px;">A &quot;NullPointerException&quot; could be thrown; &quot;getParent()&quot; can return null.</span>
<span class="t" style="left:633.4px;top:855px;font-size:15.3px;line-height:15.3px;color:#93370d;font-weight:700;letter-spacing:-0.527px;">Reliability</span>
<span class="t" style="left:745.5px;top:855px;font-size:15.3px;line-height:15.3px;color:#93370d;font-weight:700;letter-spacing:-0.459px;">Medium</span>
<span class="t" style="left:1347.5px;top:813px;font-size:15.3px;line-height:15.3px;color:#5d6cd0;font-weight:700;letter-spacing:-0.207px;">Intentionality</span>
<span class="t" style="left:1310.2px;top:855px;font-size:17.9px;line-height:17.9px;color:#3e4357;-webkit-text-stroke:0.22px;letter-spacing:0.591px;">cert</span>
<span class="t" style="left:1357.0px;top:855px;font-size:17.9px;line-height:17.9px;color:#3e4357;-webkit-text-stroke:0.22px;letter-spacing:0.086px;">cwe</span>
<span class="t" style="left:1404.7px;top:855px;font-size:17.9px;line-height:17.9px;color:#3e4357;-webkit-text-stroke:0.22px;letter-spacing:-0.750px;">...</span>
<span class="t" style="left:1435.0px;top:856px;font-size:15px;line-height:15px;color:#3e4357;font-weight:700;">+</span>
<span class="t" style="left:651.0px;top:915px;font-size:17.9px;line-height:17.9px;color:#2a2f40;-webkit-text-stroke:0.22px;letter-spacing:-0.427px;">Open</span>
<span class="t" style="left:729.0px;top:915px;font-size:17.9px;line-height:17.9px;color:#626c93;-webkit-text-stroke:0.22px;letter-spacing:0.051px;">Not assigned</span>
<span class="t" style="left:963.0px;top:915px;font-size:17.9px;line-height:17.9px;color:#626c93;-webkit-text-stroke:0.22px;letter-spacing:-0.750px;">L114</span>
<span class="t" style="left:1031.6px;top:915px;font-size:17.9px;line-height:17.9px;color:#626c93;-webkit-text-stroke:0.22px;letter-spacing:0.059px;">10min effort</span>
<span class="t" style="left:1161.6px;top:915px;font-size:17.9px;line-height:17.9px;color:#626c93;-webkit-text-stroke:0.22px;letter-spacing:0.060px;">3 years ago</span>
<span class="t" style="left:1314.7px;top:915px;font-size:17.9px;line-height:17.9px;color:#626c93;-webkit-text-stroke:0.22px;letter-spacing:-0.422px;">Bug</span>
<span class="t" style="left:1404.6px;top:915px;font-size:17.9px;line-height:17.9px;color:#626c93;-webkit-text-stroke:0.22px;letter-spacing:0.163px;">Major</span>
<span class="t" style="left:1416.6px;top:22px;font-size:15.5px;line-height:15.5px;color:#fff;font-weight:700;">?</span>
<span class="t" style="left:274.6px;top:582px;font-size:13.5px;line-height:13.5px;color:#fff;font-weight:700;">?</span>
</div></body></html>
